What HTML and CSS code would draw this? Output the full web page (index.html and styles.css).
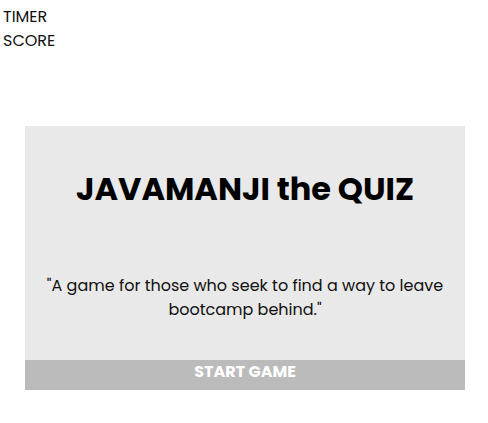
FILE: index.html
```html
<!DOCTYPE html>
<html lang="en">
<head>
<meta charset="utf-8">
<title>Javamanji</title>
<link rel="stylesheet" href="styles.css">
</head>
<body>
<header class="stats">
  <div class="stat">TIMER</div>
  <div class="stat">SCORE</div>
</header>
<main class="card">
  <h1 class="title">JAVAMANJI the QUIZ</h1>
  <p class="tagline">"A game for those who seek to find a way to leave bootcamp behind."</p>
  <button class="start">START GAME</button>
</main>
</body>
</html>
```

FILE: styles.css
```css
html, body {
  margin: 0;
  padding: 0;
  background: #ffffff;
}
body {
  font-family: "Poppins", "Inter", "Open Sans", sans-serif;
  color: #111;
  font-size: 16px;
  line-height: 24px;
}
.stats {
  padding: 5px 3px 0;
  display: flex;
  flex-direction: column;
}
.stat {
  height: 24px;
}
.card {
  margin: 73px 23px 0 25px;
  width: 440px;
  height: 264px;
  background: #e9e9e9;
  display: flex;
  flex-direction: column;
  align-items: center;
}
.title {
  margin: 44px 0 0;
  font-size: 32px;
  line-height: 38px;
  font-weight: 700;
  color: #000;
  text-align: center;
}
.tagline {
  margin: 66px 0 0;
  width: 400px;
  text-align: center;
  font-size: 16px;
  line-height: 24px;
  color: #111;
}
.start {
  margin-top: auto;
  width: 100%;
  height: 30px;
  border: 0;
  background: #bbbbbb;
  color: #fff;
  font-family: inherit;
  font-weight: 700;
  font-size: 16px;
  padding: 1px 0 0;
  line-height: 22px;
  display: flex;
  justify-content: center;
  align-items: flex-start;
}
```
